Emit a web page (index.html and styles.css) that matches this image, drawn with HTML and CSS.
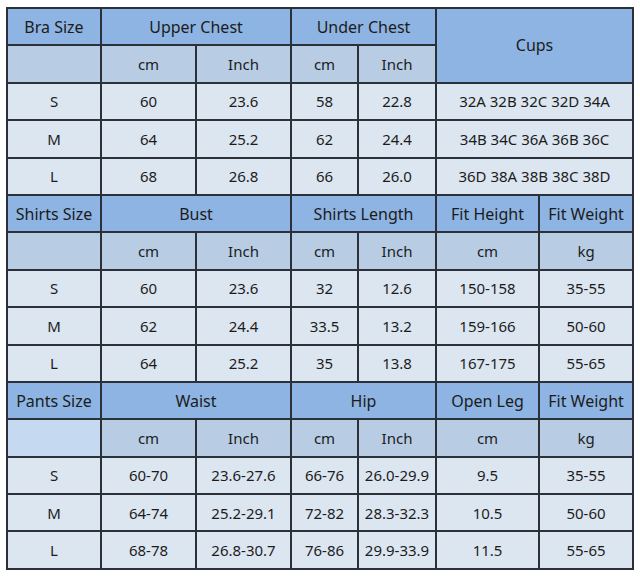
FILE: index.html
```html
<!DOCTYPE html>
<html>
<head>
<meta charset="utf-8">
<link rel="stylesheet" href="styles.css">
</head>
<body>
<table class="chart">
  <colgroup>
    <col class="c1"><col class="c2"><col class="c3"><col class="c4"><col class="c5"><col class="c6"><col class="c7">
  </colgroup>
  <tbody>
    <tr class="head"><td>Bra Size</td><td colspan="2">Upper Chest</td><td colspan="2">Under Chest</td><td colspan="2" rowspan="2">Cups</td></tr>
    <tr class="sub"><td></td><td>cm</td><td>Inch</td><td>cm</td><td>Inch</td></tr>
    <tr class="data"><td>S</td><td>60</td><td>23.6</td><td>58</td><td>22.8</td><td colspan="2">32A 32B 32C 32D 34A</td></tr>
    <tr class="data"><td>M</td><td>64</td><td>25.2</td><td>62</td><td>24.4</td><td colspan="2">34B 34C 36A 36B 36C</td></tr>
    <tr class="data"><td>L</td><td>68</td><td>26.8</td><td>66</td><td>26.0</td><td colspan="2">36D 38A 38B 38C 38D</td></tr>

    <tr class="head"><td>Shirts Size</td><td colspan="2">Bust</td><td colspan="2">Shirts Length</td><td>Fit Height</td><td>Fit Weight</td></tr>
    <tr class="sub"><td></td><td>cm</td><td>Inch</td><td>cm</td><td>Inch</td><td>cm</td><td>kg</td></tr>
    <tr class="data"><td>S</td><td>60</td><td>23.6</td><td>32</td><td>12.6</td><td>150-158</td><td>35-55</td></tr>
    <tr class="data"><td>M</td><td>62</td><td>24.4</td><td>33.5</td><td>13.2</td><td>159-166</td><td>50-60</td></tr>
    <tr class="data"><td>L</td><td>64</td><td>25.2</td><td>35</td><td>13.8</td><td>167-175</td><td>55-65</td></tr>

    <tr class="head"><td>Pants Size</td><td colspan="2">Waist</td><td colspan="2">Hip</td><td>Open Leg</td><td>Fit Weight</td></tr>
    <tr class="sub"><td class="alt"></td><td>cm</td><td>Inch</td><td>cm</td><td>Inch</td><td>cm</td><td>kg</td></tr>
    <tr class="data"><td>S</td><td>60-70</td><td>23.6-27.6</td><td>66-76</td><td>26.0-29.9</td><td>9.5</td><td>35-55</td></tr>
    <tr class="data"><td>M</td><td>64-74</td><td>25.2-29.1</td><td>72-82</td><td>28.3-32.3</td><td>10.5</td><td>50-60</td></tr>
    <tr class="data"><td>L</td><td>68-78</td><td>26.8-30.7</td><td>76-86</td><td>29.9-33.9</td><td>11.5</td><td>55-65</td></tr>
  </tbody>
</table>
</body>
</html>
```
FILE: styles.css
```css
html, body {
  margin: 0;
  padding: 0;
  background: #ffffff;
}
body {
  padding: 7px 0 0 6px;
}
.chart {
  border-collapse: collapse;
  table-layout: fixed;
  width: 628px;
  font-family: "Noto Sans", "Open Sans", sans-serif;
  font-size: 15px;
  color: #1c1c1c;
}
.c1 { width: 94px; }
.c2 { width: 95px; }
.c3 { width: 95px; }
.c4 { width: 67px; }
.c5 { width: 78px; }
.c6 { width: 103px; }
.c7 { width: 94px; }
.chart td {
  border: 2px solid #2c3038;
  text-align: center;
  vertical-align: middle;
  padding: 0;
  height: 35.4px;
  white-space: nowrap;
}
.head td { background: #8db4e2; font-size: 16px; }
.sub td { background: #b8cce4; }
.data td { background: #dce6f1; }
.sub td.alt { background: #c5d9f1; }
```
